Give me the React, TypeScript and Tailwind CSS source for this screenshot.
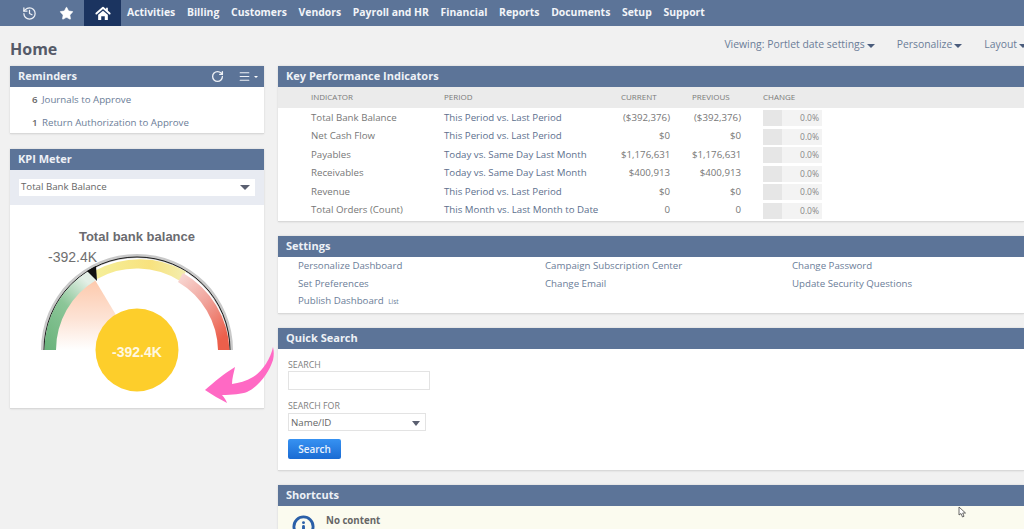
import { ReactNode } from 'react';
import { History, Star, RotateCw, Menu, Info } from 'lucide-react';

const navItems = ['Activities', 'Billing', 'Customers', 'Vendors', 'Payroll and HR', 'Financial', 'Reports', 'Documents', 'Setup', 'Support'];

const kpiRows = [
  { name: 'Total Bank Balance', period: 'This Period vs. Last Period', current: '($392,376)', previous: '($392,376)' },
  { name: 'Net Cash Flow', period: 'This Period vs. Last Period', current: '$0', previous: '$0' },
  { name: 'Payables', period: 'Today vs. Same Day Last Month', current: '$1,176,631', previous: '$1,176,631' },
  { name: 'Receivables', period: 'Today vs. Same Day Last Month', current: '$400,913', previous: '$400,913' },
  { name: 'Revenue', period: 'This Period vs. Last Period', current: '$0', previous: '$0' },
  { name: 'Total Orders (Count)', period: 'This Month vs. Last Month to Date', current: '0', previous: '0' },
];

const Caret = ({ className }: { className: string }) => (
  <span className={`inline-block h-0 w-0 border-x-[4px] border-t-[4px] border-x-transparent ${className}`} />
);

const Portlet = ({ title, actions, children }: { title: string; actions?: ReactNode; children: ReactNode }) => (
  <section className="border-b border-[#d9d9d9] bg-white shadow-[0_0_2px_rgba(0,0,0,0.12)]">
    <header className="flex h-[21px] items-center justify-between bg-[#5c7498] pl-2 pr-[4px] text-[11px] font-bold text-[#eef1f6]">
      <span>{title}</span>
      {actions}
    </header>
    {children}
  </section>
);

const HomeIcon = () => (
  <svg width="16" height="15" viewBox="0 0 18 17">
    <path d="M1.5 8.5 L9 2 L16.5 8.5" fill="none" stroke="white" strokeWidth="2.2" strokeLinecap="round" strokeLinejoin="round" />
    <path d="M12.5 2 H14.5 V6 L12.5 4.5 Z" fill="white" />
    <path d="M3.5 10 L9 5.5 L14.5 10 V16 H11 V11.5 H7 V16 H3.5 Z" fill="white" />
  </svg>
);

const Gauge = () => (
  <svg width="254" height="203" viewBox="10 204 254 203" className="block">
    <defs>
      <linearGradient id="green" x1="0" y1="1" x2="0.6" y2="0">
        <stop offset="0" stopColor="#68b27a" />
        <stop offset="0.6" stopColor="#8cc698" />
        <stop offset="1" stopColor="#e3efe6" />
      </linearGradient>
      <linearGradient id="yellow" x1="0" y1="0" x2="1" y2="0">
        <stop offset="0" stopColor="#f5ef9a" />
        <stop offset="0.6" stopColor="#f8e27e" />
        <stop offset="1" stopColor="#f3eeb0" />
      </linearGradient>
      <linearGradient id="red" x1="0" y1="0" x2="0.6" y2="1">
        <stop offset="0" stopColor="#f9dcd8" />
        <stop offset="0.5" stopColor="#f0a49c" />
        <stop offset="1" stopColor="#ec5f4b" />
      </linearGradient>
      <linearGradient id="peach" x1="0" y1="0" x2="0" y2="1">
        <stop offset="0" stopColor="#fdc9ac" />
        <stop offset="0.55" stopColor="#fde3d5" />
        <stop offset="1" stopColor="#ffffff" />
      </linearGradient>
    </defs>
    <path d="M41 349 A96 96 0 0 1 233 349 L229 349 A92 92 0 0 0 45 349 Z" fill="#c9c9c9" />
    <path d="M137 349 L55.5 349 A81.5 81.5 0 0 1 95 279 Z" fill="url(#peach)" />
    <path d="M44 349 A93 93 0 0 1 230 349" fill="none" stroke="#1c1c1c" strokeWidth="1" />
    <path d="M44.5 349 A92.5 92.5 0 0 1 89.5 269.5 L95.5 279.5 A81 81 0 0 0 56 349 Z" fill="url(#green)" />
    <path d="M95.5 269.5 A92.5 92.5 0 0 1 186 270.5 L180 280 A81 81 0 0 0 97 278 Z" fill="url(#yellow)" />
    <path d="M183 272 A92.5 92.5 0 0 1 229.5 349 L218 349 A81 81 0 0 0 178 281 Z" fill="url(#red)" />
    <path d="M87 270 L96 265 L97 280 Z" fill="#111111" />
    <circle cx="137" cy="349" r="41.5" fill="#fdce2b" />
    <text x="137" y="240" textAnchor="middle" fontSize="13" fontWeight="700" fill="#6b6b70" fontFamily="Liberation Sans, sans-serif">Total bank balance</text>
    <text x="48" y="261" fontSize="14" fill="#6f6f6f" fontFamily="Liberation Sans, sans-serif">-392.4K</text>
    <text x="137" y="356" textAnchor="middle" fontSize="14" fontWeight="700" fill="#fff8e0" fontFamily="Liberation Sans, sans-serif">-392.4K</text>
  </svg>
);

export default function App() {
  return (
    <div className="relative h-[529px] w-[1024px] overflow-hidden bg-[#f1f1f1] font-['Open_Sans',sans-serif]">
      <nav className="flex h-[26px] items-center bg-[#5c7498] text-white">
        <div className="flex w-[48px] justify-center pl-[10px]"><History size={15} strokeWidth={2} className="text-[#eef1f6]" /></div>
        <div className="flex w-[36px] justify-center pl-[1px]"><Star size={15} fill="white" strokeWidth={1} /></div>
        <div className="flex h-full w-[37px] items-center justify-center bg-[#1b3460]"><HomeIcon /></div>
        <div className="ml-[6px] flex gap-[11.7px] text-[10.4px] font-bold text-[#f2f4f8]">
          {navItems.map((item) => (
            <span key={item}>{item}</span>
          ))}
        </div>
      </nav>

      <div className="flex h-[40px] items-center justify-between pl-[10px]">
        <h1 className="pt-[6px] text-[16px] font-bold text-[#555a68]">Home</h1>
        <div className="mr-[-3px] flex items-center pb-[2px] text-[10.4px] text-[#6b7d98]">
          <span>Viewing: Portlet date settings</span>
          <Caret className="ml-[2px] mt-[2px] border-t-[#4a5c7c]" />
          <span className="ml-[22px]">Personalize</span>
          <Caret className="ml-[2px] mt-[2px] border-t-[#4a5c7c]" />
          <span className="ml-[22px]">Layout</span>
          <Caret className="ml-[2px] mt-[2px] border-t-[#4a5c7c]" />
        </div>
      </div>

      <main className="flex gap-[14px] pl-[10px]">
        <aside className="flex w-[254px] flex-col gap-[15px]">
          <Portlet
            title="Reminders"
            actions={
              <span className="flex items-center gap-[14px]">
                <RotateCw size={13} strokeWidth={2.5} />
                <span className="flex items-center gap-[1px]">
                  <Menu size={13} strokeWidth={2} />
                  <Caret className="scale-50 border-t-white" />
                </span>
              </span>
            }
          >
            <div className="h-[46px] pl-[22px] pt-[2px] text-[9.7px] text-[#6b7d98]">
              <div className="flex h-[23px] items-center"><b className="w-[10px] font-semibold text-[#666]">6</b>Journals to Approve</div>
              <div className="flex h-[23px] items-center"><b className="w-[10px] font-semibold text-[#666]">1</b>Return Authorization to Approve</div>
            </div>
          </Portlet>

          <Portlet title="KPI Meter">
            <div className="flex h-[35px] items-center justify-center bg-[#e8ebf2]">
              <div className="flex h-[17px] w-[236px] items-center justify-between bg-white pl-[2px] pr-[5px] text-[9.7px] text-[#666]">
                <span>Total Bank Balance</span>
                <Caret className="border-x-[5px] border-t-[5px] border-t-[#5a5f70]" />
              </div>
            </div>
            <Gauge />
          </Portlet>
        </aside>

        <div className="flex min-w-0 flex-1 flex-col gap-[14px]">
          <Portlet title="Key Performance Indicators">
            <div className="grid h-[21px] grid-cols-[133px_177px_49px_22px_49px_22px_59px] items-center bg-[#ebebeb] pb-[2px] pl-[33px] text-[8px] text-[#7a7a7a]">
              <span>INDICATOR</span>
              <span>PERIOD</span>
              <span>CURRENT</span>
              <span />
              <span>PREVIOUS</span>
              <span />
              <span>CHANGE</span>
            </div>
            <div className="pb-[1px] pt-[1px] text-[9.7px]">
              {kpiRows.map((row) => (
                <div key={row.name} className="grid h-[18.5px] grid-cols-[133px_177px_49px_22px_49px_22px_59px] items-center pl-[33px] text-[#777]">
                  <span>{row.name}</span>
                  <span className="whitespace-nowrap text-[#5d6f8e]">{row.period}</span>
                  <span className="whitespace-nowrap text-right">{row.current}</span>
                  <span />
                  <span className="whitespace-nowrap text-right">{row.previous}</span>
                  <span />
                  <div className="flex h-[16px] bg-[#f3f3f3] text-[8.5px]">
                    <div className="h-full w-[19px] bg-[#e6e6e6]" />
                    <span className="flex-1 pr-[3px] text-right leading-[16px] text-[#888]">0.0%</span>
                  </div>
                </div>
              ))}
            </div>
          </Portlet>

          <Portlet title="Settings">
            <div className="grid h-[56px] grid-cols-[247px_247px_1fr] content-center pb-[2px] pl-[20px] text-[9.7px] leading-[17.6px] text-[#6b7d98]">
              <span>Personalize Dashboard</span>
              <span>Campaign Subscription Center</span>
              <span>Change Password</span>
              <span>Set Preferences</span>
              <span>Change Email</span>
              <span>Update Security Questions</span>
              <span>Publish Dashboard <span className="ml-[2px] text-[6.5px]">List</span></span>
            </div>
          </Portlet>

          <Portlet title="Quick Search">
            <div className="h-[121px] pl-[10px] pt-[10px] text-[8.8px] text-[#808080]">
              <label className="block leading-[12px]">SEARCH</label>
              <div className="h-[19px] w-[142px] border border-[#e3e3e3] bg-white" />
              <label className="mt-[10px] block leading-[12px]">SEARCH FOR</label>
              <div className="mt-[1px] flex h-[18px] w-[138px] items-center justify-between border border-[#e3e3e3] bg-white pl-[2px] pr-[5px] pt-[2px] text-[9.7px] text-[#666]">
                <span>Name/ID</span>
                <Caret className="border-x-[4.5px] border-t-[5px] border-t-[#5a5f70]" />
              </div>
              <button className="mt-[8px] flex h-[20px] w-[53px] items-center justify-center rounded-[2px] bg-gradient-to-b from-[#3792f2] to-[#1a6bd3] text-[10px] font-semibold text-[#e9f2fd]">
                Search
              </button>
            </div>
          </Portlet>

          <Portlet title="Shortcuts">
            <div className="flex h-[60px] gap-[11px] bg-[#fbfbef] pl-[14px] pt-[8px]">
              <Info size={23} strokeWidth={3} className="mt-[1px] text-[#2a5fa8]" />
              <span className="text-[9.7px] font-bold leading-[13px] text-[#666]">No content</span>
            </div>
          </Portlet>
        </div>
      </main>

      {/* pink arrow added on top of the screenshot */}
      <svg className="absolute left-[200px] top-[343px]" width="80" height="65" viewBox="200 343 80 65">
        <path
          d="M273 347 C271 358 262 372 253 377 C246 381 239 383 232 384 C232 378 234 372 235 367 C225 373 214 382 205 390 C212 395 220 399 227 403 C226 400 224 397 222 395 C232 395 242 394 247 392 C258 387 269 373 273 360 C274 356 274 351 273 347 Z"
          fill="#ff69c4"
        />
      </svg>

      {/* mouse cursor */}
      <svg className="absolute left-[958px] top-[506px]" width="10" height="12" viewBox="0 0 10 12">
        <path d="M1 1 L1 9 L3 7.5 L4.5 11 L6 10.3 L4.7 7 L7.5 7 Z" fill="white" stroke="#444" strokeWidth="0.8" />
      </svg>
    </div>
  );
}
